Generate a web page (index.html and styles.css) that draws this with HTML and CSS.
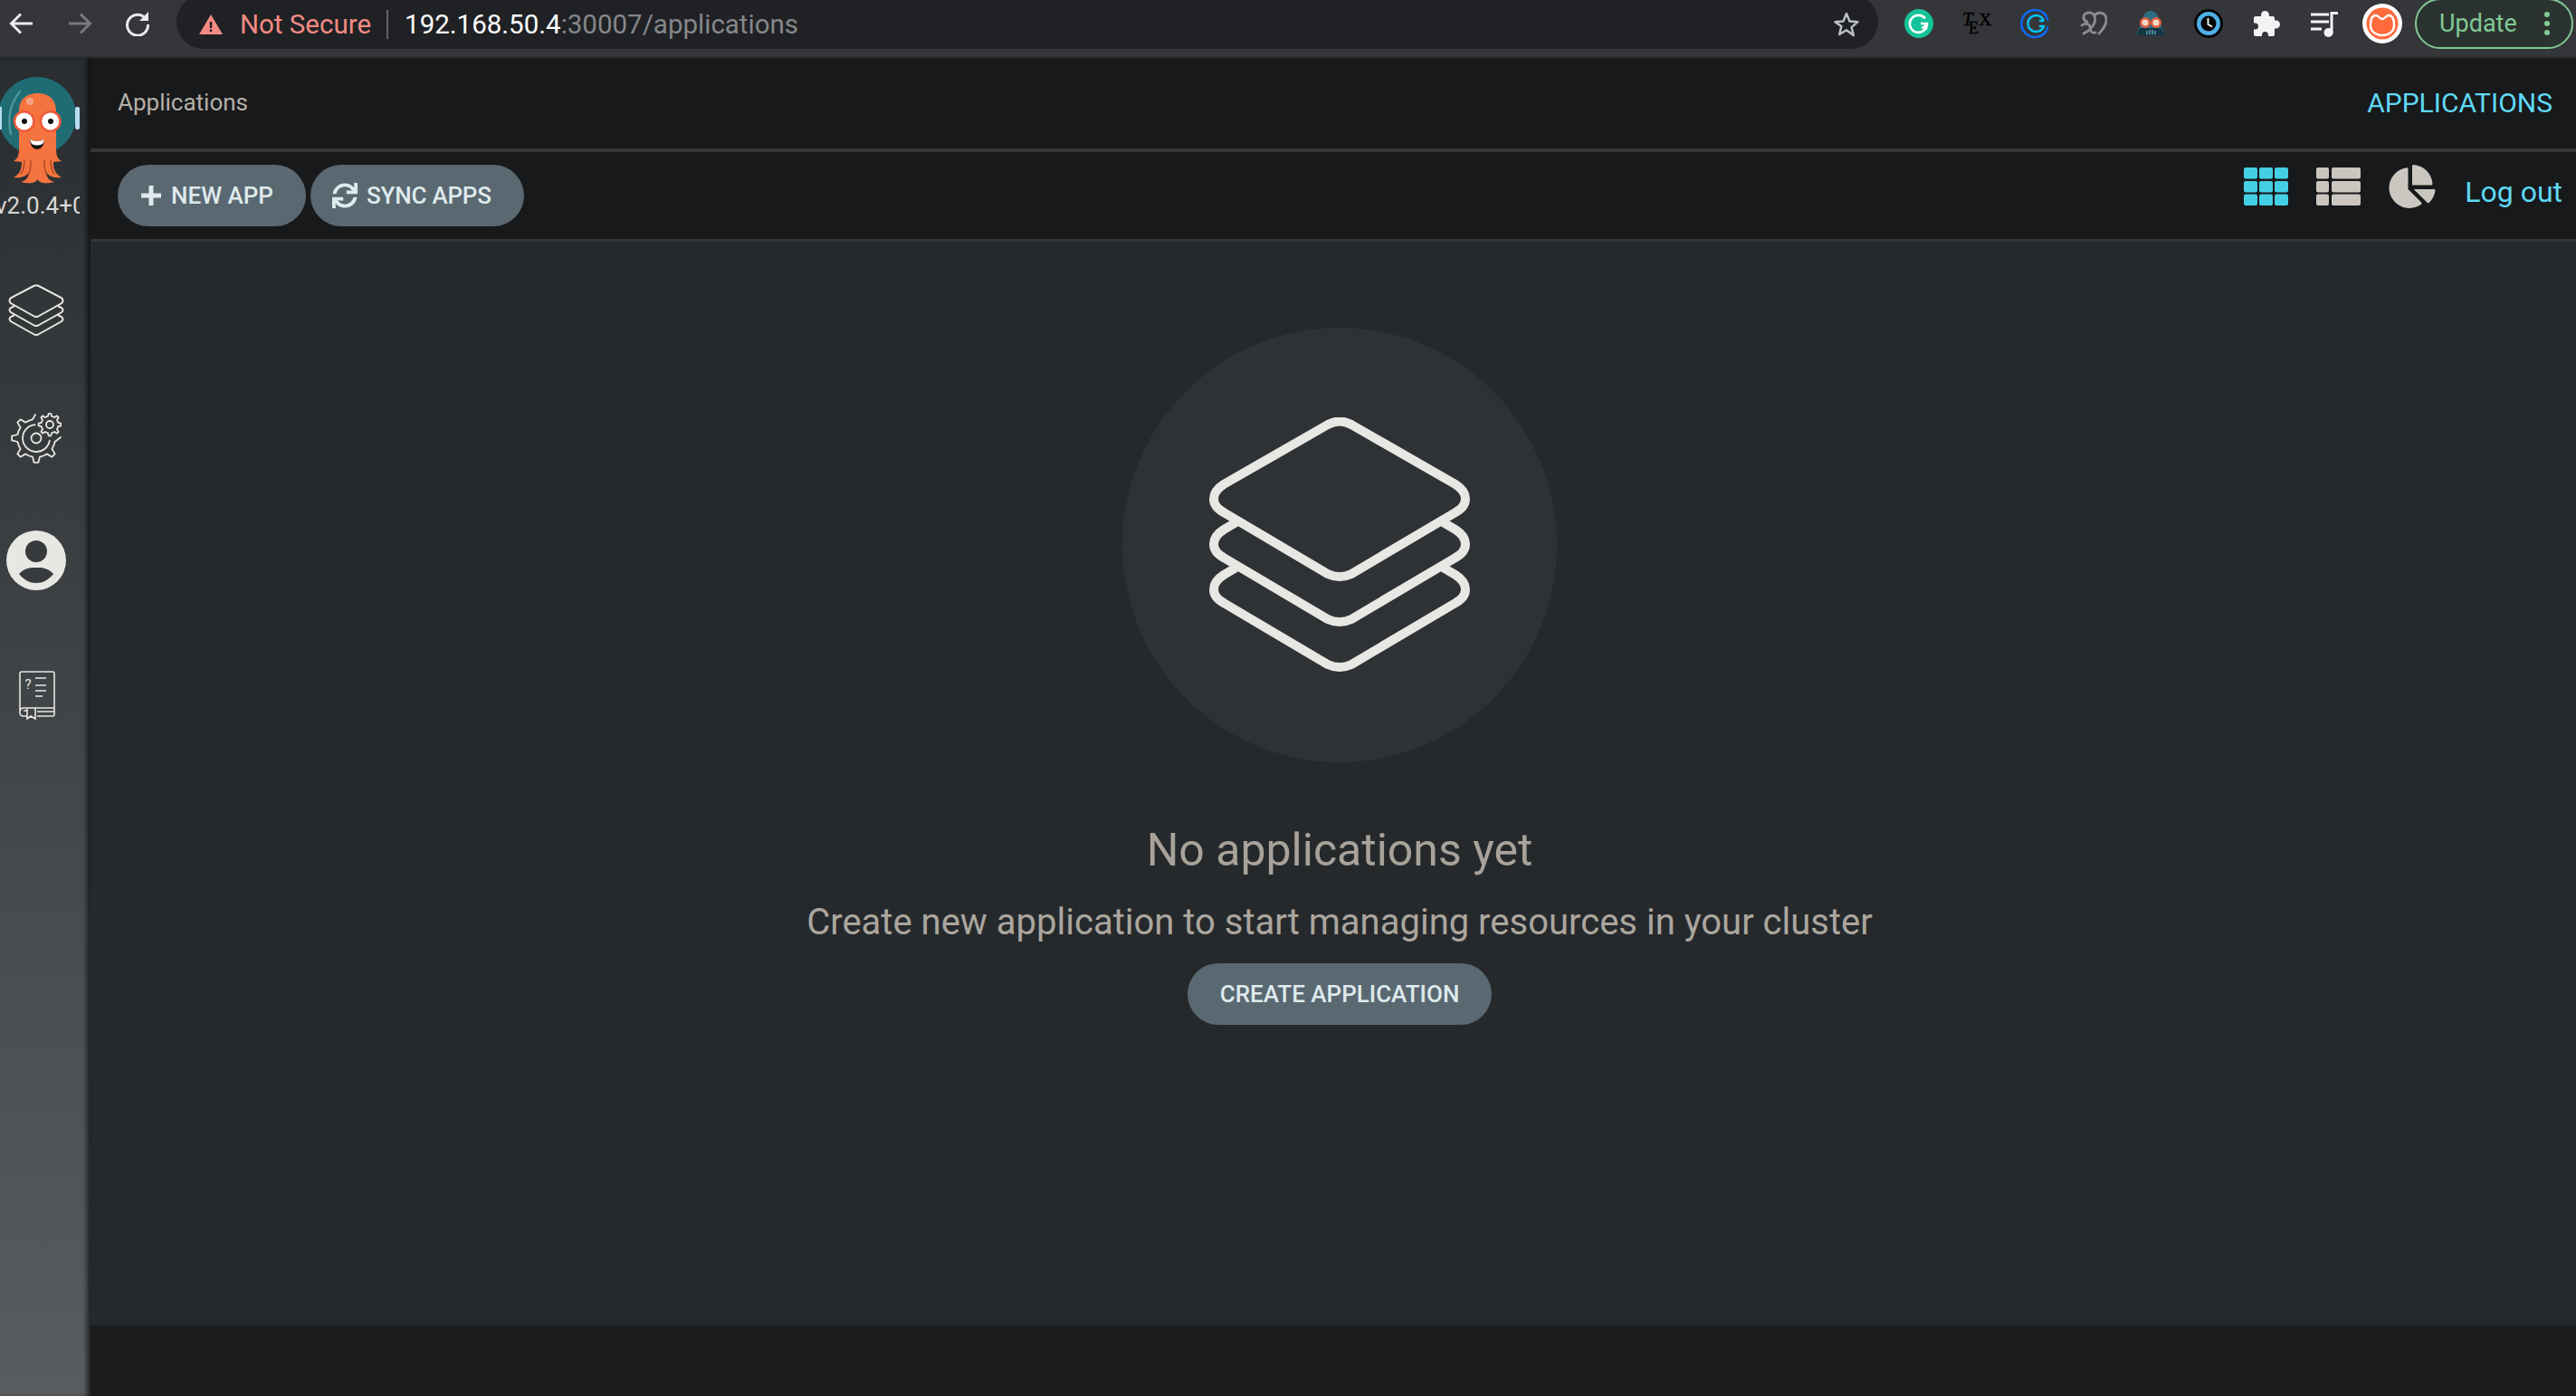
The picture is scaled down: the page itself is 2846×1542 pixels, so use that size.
FILE: index.html
```html
<!DOCTYPE html>
<html lang="en">
<head>
    <meta charset="UTF-8">
    <meta name="viewport" content="width=device-width, initial-scale=1.0">
    <title>Applications</title>
    <link rel="stylesheet" href="styles.css">
</head>
<body>
    <!-- browser toolbar -->
    <div class="chrome">
        <div class="chrome-nav">
            <svg class="nav-icon" viewBox="0 0 28 28"><path d="M26 14H3M13 3.500 2.500 14 13 24.500" fill="none" stroke="#e8eaed" stroke-width="3"/></svg>
            <svg class="nav-icon" viewBox="0 0 28 28"><path d="M2 14h23M15 3.500 25.500 14 15 24.500" fill="none" stroke="#77797c" stroke-width="3"/></svg>
            <svg class="nav-icon" viewBox="0 0 28 28"><path d="M23 8.500A11.500 11.500 0 1 0 25.500 15" fill="none" stroke="#e8eaed" stroke-width="3"/><path d="M26 1v10H16z" fill="#e8eaed"/></svg>
        </div>
        <div class="omnibox">
            <svg class="warn-icon" viewBox="0 0 26 22"><path d="M13 0 26 22H0z" fill="#f28b82"/><path d="M11.800 8h2.400v7h-2.400zM11.800 16.500h2.400V19h-2.400z" fill="#202124"/></svg>
            <span class="not-secure">Not Secure</span>
            <span class="omni-sep"></span>
            <span class="url"><span class="url-host">192.168.50.4</span>:30007/applications</span>
            <svg class="star-icon" viewBox="0 0 30 30"><path d="M15 3l3.500 8.500 9 .7-6.900 5.900 2.200 8.900L15 21.200 7.200 26l2.200-8.900L2.500 12.200l9-.7z" fill="none" stroke="#bdc1c6" stroke-width="2.400" stroke-linejoin="round"/></svg>
        </div>
        <div class="extensions">
            <span class="ext">
                <svg viewBox="0 0 32 32"><circle cx="16" cy="16" r="16" fill="#15c39a"/><path d="M23 10.500A9.500 9.500 0 1 0 25 16H18" fill="none" stroke="#fff" stroke-width="2.600"/><path d="M18 21l6-5 1 7z" fill="#fff"/></svg>
            </span>
            <span class="ext">
                <svg class="ext-tex" viewBox="0 0 32 32"><text class="tex-letter" x="0" y="18" font-size="21" font-style="italic">T</text><text class="tex-letter" x="7" y="27" font-size="18">E</text><text class="tex-letter" x="18.500" y="18" font-size="19">X</text></svg>
            </span>
            <span class="ext">
                <svg viewBox="0 0 32 32"><path d="M29 8A15 15 0 1 0 29 24" fill="none" stroke="#0a6cff" stroke-width="2.400"/><path d="M30.500 13a15 15 0 0 0-2.500-6M30.500 19a15 15 0 0 1-2.500 6" fill="none" stroke="#0a6cff" stroke-width="2"/><path d="M26 13A9 9 0 1 0 26 19H21M26 13h-5" fill="none" stroke="#00c6ff" stroke-width="2.400"/></svg>
            </span>
            <span class="ext">
                <svg viewBox="0 0 32 32"><path d="M10 14C4 12 5 5 11 4c6-1 9 5 7 11s-6 9-12 12M18 7c3-4 12-4 13 3 1 8-5 14-8 17M4 18c4-3 9-2 9 2s2 7 6 6" fill="none" stroke="#8b8c8e" stroke-width="2.800" stroke-linecap="round"/></svg>
            </span>
            <span class="ext">
                <svg viewBox="0 0 32 32"><path d="M16 2c5 0 8 4 9 9l7 18H0l7-18c1-5 4-9 9-9z" fill="#2a6f80"/><path d="M4 21h24l4 8H0z" fill="#143642"/><circle cx="10" cy="15" r="4.800" fill="#f2d6c2" stroke="#e2593a" stroke-width="2.400"/><circle cx="22" cy="15" r="4.800" fill="#f2d6c2" stroke="#e2593a" stroke-width="2.400"/><path d="M12 24v4M15 23v5M18 23v5M21 24v4" stroke="#69b5c4" stroke-width="1.300"/></svg>
            </span>
            <span class="ext">
                <svg viewBox="0 0 32 32"><circle cx="16" cy="16" r="16" fill="#060606"/><circle cx="16" cy="16" r="13" fill="#4fb0e8"/><circle cx="16" cy="16" r="8.500" fill="#060606"/><path d="M15.500 10v7l4.500 2.500" fill="none" stroke="#fff" stroke-width="1.800"/></svg>
            </span>
            <span class="ext">
                <svg class="ext-puzzle" viewBox="0 0 29 28"><path d="M2 6H8V4.500a4.500 4.500 0 0 1 9 0V6H21a2 2 0 0 1 2 2V10.500h1.500a4.500 4.500 0 0 1 0 9H23V26a2 2 0 0 1-2 2H16v-1.500a3.500 3.500 0 0 0-7 0V28H2a2 2 0 0 1-2-2V20.500H1.500a3.500 3.500 0 0 0 0-7H0V8a2 2 0 0 1 2-2z" fill="#f1f3f4"/></svg>
            </span>
            <span class="ext">
                <svg viewBox="0 0 32 32"><path d="M1 6h20M1 14h20M1 22h12" stroke="#f1f3f4" stroke-width="3"/><path d="M24 27V4.500h7" fill="none" stroke="#f1f3f4" stroke-width="3"/><circle cx="20.500" cy="26" r="5" fill="#f1f3f4"/></svg>
            </span>
            <span class="ext">
                <svg class="ext-avatar" viewBox="0 0 44 44"><circle cx="22" cy="22" r="22" fill="#fff"/><circle cx="22" cy="22" r="17.500" fill="#ff6b3d"/><path d="M9 24c0-8 3-11 6-11 3 0 4 4 7 4s4-4 7-4c3 0 6 3 6 11 0 7-6 11-13 11S9 31 9 24z" fill="none" stroke="#fff" stroke-width="2.400"/></svg>
            </span>
        </div>
        <div class="update-pill">
            <span>Update</span>
            <span class="kebab"><i></i><i></i><i></i></span>
        </div>
    </div>

    <div class="app">
        <aside class="sidebar">
            <svg class="logo" viewBox="0 0 90 125">
                <circle cx="41" cy="43" r="43" fill="#1f6c75"/>
                <path d="M22 16Q6 36 12 63" fill="none" stroke="#4f939b" stroke-width="2.500" stroke-linecap="round"/>
                <rect x="83" y="33" width="5" height="25" rx="2" fill="#b8dcf2"/>
                <rect x="0" y="33" width="2" height="25" fill="#b8dcf2"/>
                <path d="M21 38C21 24 30 18 41.500 18 53 18 62 24 62 38V78C62 86 63 90 68 93L59 94C59 102 61 107 68 111 60 112 54 110 51 105 52 112 54 114 60 116 52 118 44 118 41.500 113 39 118 31 118 23 116 29 114 31 112 32 105 29 110 23 112 15 111 22 107 24 102 24 94L15 93C20 90 21 86 21 78Z" fill="#f4733f"/>
                <path d="M27 92c0 6-1 11-4 15M34 92c0 7 0 12-3 17M49 92c0 7 0 12 3 17M56 92c0 6 1 11 4 15" fill="none" stroke="#a8431f" stroke-width="1.300"/>
                <circle cx="33" cy="27" r="4" fill="#f7a184"/>
                <circle cx="26.700" cy="49" r="12" fill="#ee5a3a"/>
                <circle cx="55.700" cy="49" r="12" fill="#ee5a3a"/>
                <circle cx="26.700" cy="49" r="9.500" fill="#fff"/>
                <circle cx="55.700" cy="49" r="9.500" fill="#fff"/>
                <circle cx="27" cy="49" r="3" fill="#111"/>
                <circle cx="56" cy="49" r="3" fill="#111"/>
                <path d="M33 69Q41 73 49 69 48 80 41 80 34 80 33 69Z" fill="#111"/>
                <path d="M33 69Q41 73 49 69 48 73 47 74 41 77 35 74 34 72 33 69Z" fill="#fff"/>
            </svg>
            <div class="version">v2.0.4+0a5a1c5</div>
            <svg class="side-icon side-layers" viewBox="0 0 62 58"><g fill="none" stroke="#e8e7e3" stroke-width="2"><path d="M28 2Q31 0.500 34 2L59 15Q62 18 59 21L34 35Q31 37 28 35L3 21Q0 18 3 15Z"/><path d="M7 24L3 26Q0 28 3 31L28 45Q31 47 34 45L59 31Q62 28 59 26L55 24"/><path d="M7 34L3 36Q0 38 3 41L28 55Q31 57 34 55L59 41Q62 38 59 36L55 34"/></g></svg>
            <svg class="side-icon side-gear" viewBox="0 0 56 56">
                <g transform="translate(28 28)" fill="none" stroke="#e8e7e3" stroke-width="1.800" stroke-linejoin="round" stroke-linecap="round">
                    <path d="M27 -1L20.600 4A21 21 0 0 1 17.400 11.700L20.700 17.400 17.400 20.700 11.700 17.400A21 21 0 0 1 4 20.600L2.400 26.900-2.400 26.900-4 20.600A21 21 0 0 1-11.700 17.400L-17.400 20.700-20.700 17.400-17.400 11.700A21 21 0 0 1-20.600 4L-26.900 2.400-26.900-2.400-20.600-4A21 21 0 0 1-17.400-11.700L-20.700-17.400-17.400-20.700-11.700-17.400A21 21 0 0 1-4-20.600L-1-26"/>
                    <path d="M14.800 2.600A15 15 0 1 1-1.300-14.900"/>
                    <circle r="5.500"/>
                </g>
                <g transform="translate(43 13)" fill="none" stroke="#e8e7e3" stroke-width="1.800" stroke-linejoin="round">
                    <path d="M9.300-2L12.400-1.300 12.400 1.300 9.300 2 8 5.200 9.700 7.900 7.900 9.700 5.200 8 2 9.300 1.300 12.400-1.300 12.400-2 9.300-5.200 8-7.900 9.700-9.700 7.900-8 5.200-9.300 2-12.400 1.300-12.400-1.300-9.300-2-8-5.200-9.700-7.900-7.900-9.700-5.200-8-2-9.300-1.300-12.400 1.300-12.400 2-9.300 5.200-8 7.900-9.700 9.700-7.900 8-5.200Z"/>
                    <circle r="4"/>
                </g>
            </svg>
            <svg class="side-icon side-user" viewBox="0 0 66 66"><circle cx="33" cy="33" r="33" fill="#e8e7e3"/><circle cx="33" cy="23" r="12" fill="#373b3e"/><path d="M14 48C20 41 27 41 33 41 39 41 46 41 52 48 46 55 40 58 33 58 26 58 20 55 14 48Z" fill="#373b3e"/></svg>
            <svg class="side-icon side-guide" viewBox="0 0 40 54">
                <g fill="none" stroke="#e8e7e3" stroke-width="1.600">
                    <path d="M1 46V3Q1 1 3 1H37Q39 1 39 3V49Q39 50 37 50H20M9 50H5Q1 50 1 46Q1 41 5 41H39"/>
                    <path d="M9 44H5M9 41V53L13 50 18 53V41M20 45H39"/>
                    <path d="M18 8H30M18 16H30M18 22H30M18 28H26"/>
                </g>
                <text class="guide-mark" x="6.500" y="20">?</text>
            </svg>
        </aside>

        <main class="page">
            <header class="topbar">
                <span class="page-title">Applications</span>
                <span class="page-link">APPLICATIONS</span>
            </header>
            <div class="toolbar">
                <div class="toolbar-actions">
                    <button class="btn">
                        <svg class="btn-icon btn-plus" viewBox="0 0 22 22"><path d="M8.500 0h5v8.500H22v5h-8.500V22h-5v-8.500H0v-5h8.500z" fill="currentColor"/></svg>
                        NEW APP
                    </button>
                    <button class="btn btn-sync-app">
                        <svg class="btn-icon btn-sync" viewBox="0 0 512 512"><path d="M440.650 12.570l4 82.770A247.160 247.160 0 0 0 255.830 8C134.730 8 33.910 94.920 12.290 209.820A12 12 0 0 0 24.090 224h49.050a12 12 0 0 0 11.670-9.260 175.910 175.910 0 0 1 317-56.940l-101.460-4.860a12 12 0 0 0-12.570 12v47.410a12 12 0 0 0 12 12H500a12 12 0 0 0 12-12V12a12 12 0 0 0-12-12h-47.370a12 12 0 0 0-11.980 12.570zM255.830 432a175.610 175.610 0 0 1-146-77.800l101.800 4.870a12 12 0 0 0 12.570-12v-47.400a12 12 0 0 0-12-12H12a12 12 0 0 0-12 12V500a12 12 0 0 0 12 12h47.350a12 12 0 0 0 12-12.600l-4.150-82.570A247.170 247.170 0 0 0 255.830 504c121.110 0 221.930-86.920 243.550-201.820a12 12 0 0 0-11.800-14.180h-49.050a12 12 0 0 0-11.670 9.260A175.860 175.860 0 0 1 255.830 432z" fill="currentColor"/></svg>
                        SYNC APPS
                    </button>
                </div>
                <div class="toolbar-views">
                    <svg class="view-icon view-active" viewBox="0 0 49 42">
                        <rect width="15" height="12.500" rx="2"/><rect x="17" width="15" height="12.500" rx="2"/><rect x="34" width="15" height="12.500" rx="2"/>
                        <rect y="15" width="15" height="12.500" rx="2"/><rect x="17" y="15" width="15" height="12.500" rx="2"/><rect x="34" y="15" width="15" height="12.500" rx="2"/>
                        <rect y="29.500" width="15" height="12.500" rx="2"/><rect x="17" y="29.500" width="15" height="12.500" rx="2"/><rect x="34" y="29.500" width="15" height="12.500" rx="2"/>
                    </svg>
                    <svg class="view-icon" viewBox="0 0 49 42">
                        <rect width="14" height="12.500" rx="2"/><rect x="17" width="32" height="12.500" rx="2"/>
                        <rect y="15" width="14" height="12.500" rx="2"/><rect x="17" y="15" width="32" height="12.500" rx="2"/>
                        <rect y="29.500" width="14" height="12.500" rx="2"/><rect x="17" y="29.500" width="32" height="12.500" rx="2"/>
                    </svg>
                    <svg class="view-icon view-pie" viewBox="0 0 544 512"><path d="M527.790 288H290.500l158.030 158.030c6.040 6.040 15.980 6.530 22.190.68 38.700-36.460 65.320-85.610 73.130-140.860 1.340-9.460-6.510-17.850-16.060-17.850zm-15.830-64.800C503.720 103.740 408.260 8.280 288.800.04 279.680-.59 272 7.100 272 16.240V240h223.770c9.140 0 16.820-7.680 16.190-16.800zM224 288V50.710c0-9.550-8.390-17.400-17.840-16.060C86.990 51.490-4.100 155.600.14 280.370 4.500 408.510 114.830 513.590 243.030 511.980c50.400-.63 96.970-16.870 135.260-44.030 7.900-5.600 8.420-17.230 1.570-24.080L224 288z"/></svg>
                    <a class="logout" href="#">Log out</a>
                </div>
            </div>
            <section class="empty">
                <div class="empty-circle">
                    <svg class="empty-icon" viewBox="0 0 288 282"><g fill="none" stroke="#e8e7e3" stroke-width="10"><path d="M131 8Q144 1 157 8L272 74Q283 81 283 90 283 99 272 105L157 173Q144 179 131 173L16 105Q5 99 5 90 5 81 16 74Z"/><path d="M33 114L16 124Q5 131 5 140 5 149 16 155L131 223Q144 229 157 223L272 155Q283 149 283 140 283 131 272 124L255 114"/><path d="M33 164L16 174Q5 181 5 190 5 199 16 205L131 273Q144 279 157 273L272 205Q283 199 283 190 283 181 272 174L255 164"/></g></svg>
                </div>
                <h2 class="empty-title">No applications yet</h2>
                <p class="empty-text">Create new application to start managing resources in your cluster</p>
                <button class="btn btn-create">CREATE APPLICATION</button>
            </section>
            <footer class="page-footer"></footer>
        </main>
    </div>
</body>
</html>
```

FILE: styles.css
```css
* {
    box-sizing: border-box;
}

html, body {
    height: 100%;
}

body {
    margin: 0;
    display: flex;
    flex-direction: column;
    overflow: hidden;
    font-family: Roboto, "Liberation Sans", sans-serif;
    background-color: #18191b;
}

/* browser toolbar */
.chrome {
    flex: 0 0 64px;
    display: flex;
    overflow: hidden;
    background-color: #35363a;
    border-bottom: 2px solid #2d2e32;
}

.chrome-nav {
    flex: 0 0 195px;
    display: flex;
    align-items: center;
    height: 52px;
    padding-left: 10px;
    gap: 36px;
}

.nav-icon {
    width: 28px;
    height: 28px;
}

.omnibox {
    flex: 0 0 1880px;
    height: 60px;
    margin-top: -6px;
    padding: 6px 20px 0 25px;
    display: flex;
    align-items: center;
    background-color: #202124;
    border-radius: 30px;
    font-size: 29.500px;
}

.warn-icon {
    width: 26px;
    height: 22px;
}

.not-secure {
    margin-left: 19px;
    color: #f28b82;
}

.omni-sep {
    width: 2px;
    height: 32px;
    margin: 0 18px 0 17px;
    background-color: #5f6368;
}

.url {
    color: #85878a;
}

.url-host {
    color: #fff;
}

.star-icon {
    width: 30px;
    height: 30px;
    margin-left: auto;
}

.extensions {
    display: flex;
    margin-left: 13px;
    height: 52px;
}

.ext {
    width: 64px;
    display: flex;
    align-items: center;
    justify-content: center;
}

.ext svg {
    width: 32px;
    height: 32px;
}

.ext .ext-tex {
    overflow: visible;
}

.ext .ext-avatar {
    width: 44px;
    height: 44px;
}

.ext .ext-puzzle {
    width: 29px;
    height: 28px;
}

.tex-letter {
    font-family: "Liberation Serif", serif;
    fill: #000;
    stroke: #000;
    stroke-width: 0.5px;
}

.update-pill {
    flex: 0 0 175px;
    height: 56px;
    margin: -2px 0 0 4px;
    padding-left: 25px;
    display: flex;
    align-items: center;
    color: #81c995;
    font-size: 27px;
    background-color: #2b3330;
    border: 2px solid #81c995;
    border-radius: 28px;
}

.kebab {
    margin-left: 30px;
    display: flex;
    flex-direction: column;
    gap: 4px;
}

.kebab i {
    width: 6px;
    height: 6px;
    border-radius: 50%;
    background-color: #81c995;
}

/* app shell */
.app {
    flex: 1;
    min-height: 0;
    display: flex;
}

.sidebar {
    flex: 0 0 100px;
    display: flex;
    flex-direction: column;
    align-items: flex-start;
    background: linear-gradient(#292d30, #595d60);
    box-shadow: inset -6px 0 5px -2px rgba(0, 0, 0, 0.6);
}

.logo {
    width: 90px;
    height: 125px;
    margin-top: 21px;
}

.version {
    width: 88px;
    margin-top: 2px;
    overflow: hidden;
    white-space: nowrap;
    text-indent: -5px;
    color: #d9d8d5;
    font-size: 26px;
    line-height: 30px;
}

.side-icon {
    display: block;
}

.side-layers {
    width: 62px;
    height: 58px;
    margin: 72px 0 0 9px;
}

.side-gear {
    width: 56px;
    height: 56px;
    margin: 84px 0 0 12px;
}

.side-user {
    width: 66px;
    height: 66px;
    margin: 74px 0 0 7px;
}

.side-guide {
    width: 40px;
    height: 54px;
    margin: 89px 0 0 21px;
}

.guide-mark {
    font-size: 15px;
    fill: #e8e7e3;
    font-family: Roboto, sans-serif;
}

.page {
    flex: 1;
    min-width: 0;
    display: flex;
    flex-direction: column;
}

.topbar {
    flex: 0 0 104px;
    padding: 2px 26px 4px 30px;
    display: flex;
    align-items: center;
    justify-content: space-between;
    background-color: #18191b;
    border-bottom: 4px solid #333537;
}

.page-title {
    color: #b5b0a8;
    font-size: 26px;
}

.page-link {
    color: #5fd9f5;
    font-size: 30px;
}

.toolbar {
    flex: 0 0 99px;
    padding: 14px 15px 0 30px;
    display: flex;
    justify-content: space-between;
    align-items: flex-start;
    background-color: #18191b;
    border-bottom: 3px solid #333537;
}

.toolbar-actions {
    display: flex;
    gap: 5px;
}

.btn {
    height: 68px;
    padding: 0 36px 0 26px;
    display: flex;
    align-items: center;
    color: #dfeaec;
    font-family: inherit;
    font-size: 26px;
    font-weight: 500;
    background-color: #5a6872;
    border: none;
    border-radius: 34px;
    cursor: pointer;
}

.btn-sync-app {
    padding-left: 24px;
    letter-spacing: -0.2px;
}

.btn-icon {
    margin-right: 11px;
}

.btn-plus {
    width: 22px;
    height: 22px;
}

.btn-sync {
    width: 28px;
    height: 28px;
    margin-right: 10px;
}

.toolbar-views {
    display: flex;
    align-items: flex-start;
}

.view-icon {
    width: 49px;
    height: 42px;
    margin: 3px 31px 0 0;
    fill: #cbc6bf;
}

.view-active {
    fill: #44cfe4;
}

.view-pie {
    width: 52px;
    height: 48px;
    margin: 0 32px 0 0;
}

.logout {
    margin-top: 11px;
    color: #5fd9f5;
    font-size: 32px;
    text-decoration: none;
}

/* empty state */
.empty {
    flex: 1;
    min-height: 0;
    padding: 95px 0 0 14px;
    display: flex;
    flex-direction: column;
    align-items: center;
    background-color: #26292c;
}

.empty-circle {
    width: 480px;
    height: 480px;
    flex-shrink: 0;
    display: flex;
    align-items: center;
    justify-content: center;
    background-color: #2f3235;
    border-radius: 50%;
}

.empty-icon {
    width: 288px;
    height: 282px;
}

.empty-title {
    margin: 67px 0 0;
    color: #a8a29a;
    font-size: 50px;
    font-weight: 400;
    line-height: 60px;
}

.empty-text {
    margin: 27px 0 0;
    color: #aba69e;
    font-size: 40px;
    line-height: 46px;
}

.btn-create {
    margin-top: 22px;
    padding: 0 36px;
    flex-shrink: 0;
}

.page-footer {
    flex: 0 0 78px;
    background-color: #1b1c1e;
}
```
